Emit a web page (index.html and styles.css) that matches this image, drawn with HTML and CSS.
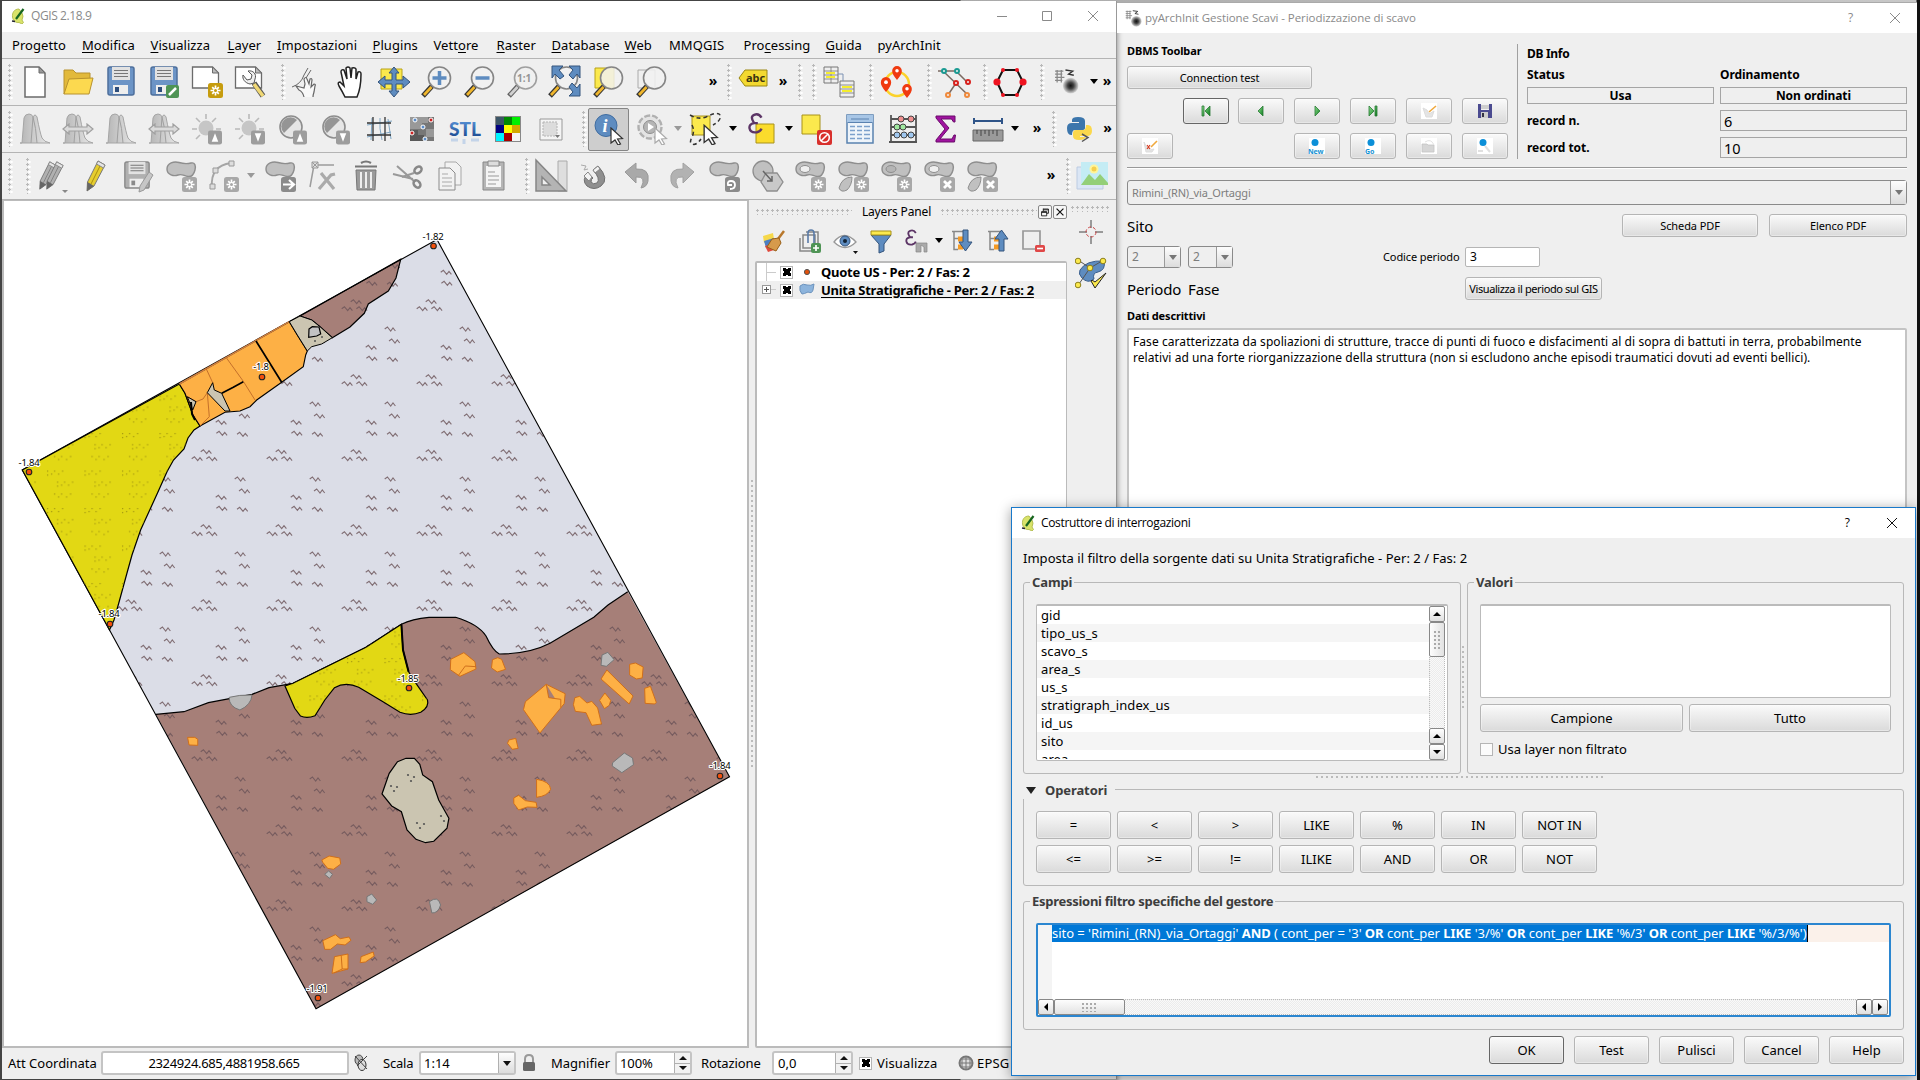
FILE: index.html
```html
<!DOCTYPE html>
<html lang="it">
<head>
<meta charset="utf-8">
<title>QGIS 2.18.9</title>
<link rel="stylesheet" href="styles.css">
</head>
<body>
<svg class="defs" aria-hidden="true">
  <defs>
    <linearGradient id="gGray" x1="0" y1="0" x2="1" y2="0"><stop offset="0" stop-color="#b4b4b4"/><stop offset="1" stop-color="#e9e9e9"/></linearGradient>
    <linearGradient id="gGreen" x1="0" y1="0" x2="1" y2="1"><stop offset="0" stop-color="#8fe08f"/><stop offset="1" stop-color="#0b7a1c"/></linearGradient>
    <radialGradient id="gBall"><stop offset="0" stop-color="#111"/><stop offset=".4" stop-color="#444"/><stop offset="1" stop-color="#d8d8d8"/></radialGradient>
    <linearGradient id="gStl" x1="0" y1="0" x2="0" y2="1"><stop offset="0" stop-color="#5f9be0"/><stop offset="1" stop-color="#123f86"/></linearGradient>
    <pattern id="waves" x="340" y="320" width="75" height="75" patternUnits="userSpaceOnUse">
      <g fill="none" stroke="#6a5357" stroke-opacity=".8" stroke-width="1.100">
        <path d="M44.700 9l2.700-2 3.300 4 2.300-3 2.400 3"/>
        <path d="M49 21l2.700-2 3.300 4 2.300-3 2.400 3"/>
        <path d="M25.700 27.300l2.700-2 3.300 4 2.300-3 2.400 3"/>
        <path d="M26.400 38.300l2.700-2 3.300 4 2.300-3 2.400 3"/>
        <path d="M47 39.300l2.700-2 3.300 4 2.300-3 2.400 3"/>
        <path d="M10.700 56.700l2.700-2 3.300 4 2.300-3 2.400 3"/>
        <path d="M1.700 63.700l2.700-2 3.300 4 2.300-3 2.400 3"/>
        <path d="M16.400 63.700l2.700-2 3.300 4 2.300-3 2.400 3"/>
      </g>
    </pattern>
    <pattern id="sand" x="44" y="506" width="37.500" height="37.500" patternUnits="userSpaceOnUse">
      <g fill="#a39710">
        <path d="M3 2h1.200v1.200h-1.200zM7 5h1.200v1.200h-1.200zM10 2h1.200v1.200h-1.200zM14 5h1.200v1.200h-1.200zM18 2h1.200v1.200h-1.200zM3 6h1.200v1.200h-1.200z"/>
        <path d="M13 13h1.200v1.200h-1.200zM17 16h1.200v1.200h-1.200zM20 13h1.200v1.200h-1.200zM24 16h1.200v1.200h-1.200zM28 13h1.200v1.200h-1.200zM13 17h1.200v1.200h-1.200z"/>
        <path d="M10 25h1.200v1.200h-1.200zM14 28h1.200v1.200h-1.200zM17 25h1.200v1.200h-1.200zM22 28h1.200v1.200h-1.200zM26 25h1.200v1.200h-1.200z"/>
      </g>
    </pattern>

    <symbol id="i-star" viewBox="0 0 15 15"><rect width="15" height="15" rx="2.500" fill="var(--b,#a8a8a8)"/><path d="M7.500 2.500v10M2.500 7.500h10M4.200 4.200l6.600 6.600M10.800 4.200l-6.600 6.600" stroke="#fff" stroke-width="1.700"/><circle cx="7.500" cy="7.500" r="1.500" fill="var(--b,#a8a8a8)"/></symbol>
    <symbol id="i-x" viewBox="0 0 15 15"><rect width="15" height="15" rx="2.500" fill="#a8a8a8"/><path d="M4 4l7 7M11 4l-7 7" stroke="#fff" stroke-width="2.800"/></symbol>
    <symbol id="i-blob" viewBox="0 0 32 32"><path d="M2 9C2 3 9 1 14 2.500S22 4 26 3s5 3 4 7-3 7-7 6.500-6-3-10-1.500S2 15 2 9z" fill="#c0c0c0" stroke="#8e8e8e" stroke-width="1.400"/></symbol>
    <symbol id="i-lens" viewBox="0 0 32 32"><path d="M12 19L2 30" stroke="#333" stroke-width="5"/><path d="M10.500 21L3 29" stroke="var(--h,#f0b62c)" stroke-width="2.800"/><circle cx="18.500" cy="12" r="11" fill="#f1f1f1" fill-opacity=".85" stroke="#858585" stroke-width="1.600"/></symbol>
    <symbol id="i-cursor" viewBox="0 0 14 18"><path d="M1 1l11.500 10.500-5 .5 3 5-2.500 1-3-5L1 16z" fill="#fff" stroke="var(--k,#333)" stroke-width="1.200"/></symbol>
    <symbol id="i-hist" viewBox="0 0 32 32"><path d="M1 30h2L5 5q1-4 5-4 3 0 4 3 2-4 4 0 3 16 5 21 2 4 8 5z" fill="url(#gGray)" stroke="#a6a6a6"/><path d="M14 4q3 10 4 26M12 30l2-26" stroke="#a0a0a0" fill="none"/></symbol>
    <symbol id="i-arr" viewBox="0 0 32 12"><path d="M1 6l6-5v3h18V1l6 5-6 5V8H7v3z" fill="#dadada" stroke="#a0a0a0" stroke-width="1.200"/></symbol>
    <symbol id="i-up" viewBox="0 0 15 15"><rect width="15" height="15" rx="2.500" fill="#9d9d9d"/><path d="M7.500 3l3.500 9h-7z" fill="#fff"/></symbol>
    <symbol id="i-dn" viewBox="0 0 15 15"><rect width="15" height="15" rx="2.500" fill="#9d9d9d"/><path d="M7.500 12l3.500-9h-7z" fill="#fff"/></symbol>
    <symbol id="i-sun" viewBox="0 0 32 32"><path d="M15 1v5M1 16h5M25 16h5M5 5l4 4M25 5l-4 4M5 26l4-4" stroke="#b9b9b9" stroke-width="1.600"/><circle cx="15" cy="15" r="7.500" fill="#c6c6c6"/></symbol>
    <symbol id="i-con" viewBox="0 0 32 32"><circle cx="14" cy="14" r="11" fill="#e6e6e6" stroke="#8d8d8d" stroke-width="1.600"/><path d="M20 7A9 9 0 1 0 7 20z" fill="#959595"/></symbol>
    <symbol id="i-page" viewBox="0 0 28 23"><path d="M1 1h20l6 6v15H1z" fill="#fff" stroke="#6b6b6b" stroke-width="1.300"/><path d="M21 1v6h6z" fill="#bbb" stroke="#6b6b6b"/></symbol>
    <symbol id="i-disk" viewBox="0 0 28 30"><rect x="1" y="1" width="26" height="28" rx="2" fill="var(--d,#6c94c6)" stroke="var(--e,#4d6f9c)" stroke-width="1.500"/><path d="M5 1h18v13H5z" fill="#e2e2e2"/><path d="M7 4.500h14M7 7.500h14M7 10.500h14" stroke="#777" stroke-width="1.200"/><rect x="6" y="19" width="15" height="9" fill="#eee"/><rect x="8" y="21" width="4" height="5" fill="var(--e,#2e4e7c)"/></symbol>
    <symbol id="i-qgis" viewBox="0 0 14 16"><path d="M8 1C3 1 1 5 1.500 9S5 15 8 14.500l3 1.500 1.500-1.500L11 12q2-4 0-7z" fill="#d9e36a" stroke="#a8b240" stroke-width=".8"/><path d="M12.500 1L5 11" stroke="#16651f" stroke-width="2.200"/><path d="M1 13l3 .5" stroke="#223" stroke-width="1.500"/></symbol>
    <symbol id="i-arch" viewBox="0 0 24 24"><path d="M1 2h8M1 5h7M1 8h9M1 11h7M3 1v12M7 1v12" stroke="#888" stroke-width="1.200"/><path d="M11 1l7 1-4 3 5 1" stroke="#333" fill="none" stroke-width="1.300"/><circle cx="16" cy="16" r="7.500" fill="url(#gBall)"/></symbol>
    <symbol id="i-pen" viewBox="0 0 22 32"><path d="M14 1l7 4-11 21-7 5 .5-9z" fill="var(--p,#e6cd2e)" stroke="#777"/><path d="M17.500 3L7 24" stroke="var(--q,#a98f10)"/><path d="M14 1l7 4-1.500 3-7-4z" fill="#e4e4e4" stroke="#888"/><path d="M3.500 22l6.500 4-7 5z" fill="#666"/></symbol>
    <symbol id="i-pin" viewBox="0 0 12 16"><path d="M6 16Q0 9 .5 5.500a5.500 5.500 0 0 1 11 0Q12 9 6 16z" fill="#f03a10"/><circle cx="6" cy="5.500" r="2" fill="#fff"/></symbol>
    <symbol id="i-eps" viewBox="0 0 18 24"><path d="M15 5Q12 0 7 2T7 11Q1 12 2 17t8 4q4-1 5-4M6 11h5" fill="none" stroke="#5c3566" stroke-width="2.600"/></symbol>
    <symbol id="i-tree" viewBox="0 0 14 20"><path d="M1 1h12M3 1v18h4M3 8h4" stroke="#888" fill="none" stroke-width="1.500"/><path d="M7 6h5v5H7zM7 14h5v5H7z" fill="#f59a23"/></symbol>
  </defs>
</svg>

<main class="desktop">
<section class="window qgis">
  <header class="titlebar">
    <svg width="14" height="16"><use href="#i-qgis"/></svg><span class="t">QGIS 2.18.9</span>
    <svg class="wbtn" width="100" height="14" fill="none" stroke="#8a8a8a"><path d="M1 7.500h10M46.500 2.500h9v9h-9zM92 2l10 10M102 2L92 12" /></svg>
  </header>
  <nav class="menu"><span>Progetto</span><span><u>M</u>odifica</span><span><u>V</u>isualizza</span><span><u>L</u>ayer</span><span><u>I</u>mpostazioni</span><span><u>P</u>lugins</span><span>Vett<u>o</u>re</span><span><u>R</u>aster</span><span><u>D</u>atabase</span><span><u>W</u>eb</span><span>MMQGIS</span><span>Pro<u>c</u>essing</span><span><u>G</u>uida</span><span>pyArchInit</span></nav>

  <div class="toolbar tb1">
    <i class="grip"></i>
    <svg class="ic" viewBox="0 0 32 32"><path d="M6 1h14l6 6v24H6z" fill="#fff" stroke="#6b6b6b" stroke-width="1.500"/><path d="M20 1v6h6z" fill="#999" stroke="#6b6b6b"/></svg>
    <svg class="ic" viewBox="0 0 32 32"><path d="M2 28V4h9l3 3h14v6" fill="#e2b93b" stroke="#b8922e"/><path d="M2 28l5-15 24-1-4 16z" fill="#fcd94f" stroke="#b8922e"/></svg>
    <svg class="ic" viewBox="0 0 32 32"><use href="#i-disk" x="2" y="0" width="28" height="30"/></svg>
    <svg class="ic" viewBox="0 0 32 32"><use href="#i-disk" x="2" y="0" width="28" height="30"/><rect x="18" y="19" width="13" height="13" rx="2" fill="#4f9455"/><path d="M21 29l7-7" stroke="#fff" stroke-width="2.500"/></svg>
    <svg class="ic" viewBox="0 0 32 32"><use href="#i-page" x="0" y="0" width="29" height="23"/><g style="--b:#c69c0e"><use href="#i-star" x="17" y="17" width="15" height="15"/></g></svg>
    <svg class="ic" viewBox="0 0 32 32"><use href="#i-page" x="0" y="0" width="29" height="23"/><path d="M20 17l9 13" stroke="#555" stroke-width="5.500"/><path d="M20 18l9 12" stroke="#f0d875" stroke-width="3.600"/><path d="M9 9l4 5 4-1 1-4-4-4c5-1 9 3 7 8l-1 4-4 1c-5-1-8-5-7-9z" fill="#eee" stroke="#555"/></svg>
    <i class="grip"></i>
    <svg class="ic" viewBox="0 0 32 32"><path d="M12 31q-1-5-5-7l-3-4 4 1 4 1 1-4-1-5q2-3 3 0l2 5 1-5q2-1 2 1l-1 7 3-3q2 0 1 2l-1 6q-1 3-1 5" fill="#f8f8f8" stroke="#666" stroke-width="1.200"/><path d="M0 21q9-3 12-12l4-7M14 12l5-8" stroke="#666" fill="none"/></svg>
    <svg class="ic" viewBox="0 0 32 32"><path d="M10 31Q7 25 4 20q-2-4 1-4l4 4L6 6q0-3 3-2l3 9-1-11q2-2 4 0l1 10 1-10q3-1 4 1v10l2-7q3-1 3 2 0 14-4 23z" fill="#fff" stroke="#222" stroke-width="1.500"/></svg>
    <svg class="ic" viewBox="0 0 32 32"><path d="M3 3h21v20H3z" fill="#fbe94d" stroke="#b8a218"/><path d="M16 1l5 6h-3v7h7v-4l7 6-7 6v-4h-7v7h3l-5 6-5-6h3v-7H7v4l-7-6 7-6v4h7V7h-3z" fill="#5e8cc0" stroke="#34547c"/></svg>
    <svg class="ic" viewBox="0 0 32 32"><use href="#i-lens"/><path d="M18.500 5v14M11.500 12h14" stroke="#5e8cc0" stroke-width="3.500"/></svg>
    <svg class="ic" viewBox="0 0 32 32"><use href="#i-lens"/><path d="M11.500 12h14" stroke="#5e8cc0" stroke-width="3.500"/></svg>
    <svg class="ic gray" viewBox="0 0 32 32"><use href="#i-lens"/><text x="10" y="16" class="g11">1:1</text></svg>
    <svg class="ic" viewBox="0 0 32 32"><use href="#i-lens" x="-2"/><path d="M2 0h11l-4 4 5 6-4 3-5-5-3 4zM30 0H19l4 4-4 5 4 4 4-5 3 4zM30 30H19l4-4-4-5 3-4 5 5 3-4z" fill="#5e8cc0" stroke="#34547c"/></svg>
    <svg class="ic" viewBox="0 0 32 32"><path d="M2 2h19v20H2z" fill="#fbe94d" stroke="#b8a218"/><use href="#i-lens"/></svg>
    <svg class="ic" viewBox="0 0 32 32"><path d="M2 4h17v18H2z" fill="none" stroke="#aaa"/><use href="#i-lens"/></svg>
    <b class="more">»</b><i class="grip"></i>
    <svg class="ic lbl" viewBox="0 0 32 32"><path d="M2 12l6-8h22v16H8z" fill="#f3d930" stroke="#9a8714"/><text x="9" y="16" class="abc">abc</text></svg>
    <b class="more c">»</b><i class="grip"></i><i class="grip"></i>
    <svg class="ic" viewBox="0 0 32 32"><g fill="#eee" stroke="#777"><path d="M1 1h14v16H1zM17 15h14v16H17z"/><path d="M1 5h14M1 9h14M1 13h14M17 19h14M17 23h14M17 27h14M8 1v16" stroke-width=".8"/></g><path d="M3 7h9M3 11h9M19 21h10M19 25h10" stroke="#f5ee2c" stroke-width="2"/><path d="M15 8h5v7" fill="none" stroke="#7d92b3"/></svg>
    <i class="grip"></i>
    <svg class="ic" viewBox="0 0 32 32"><circle cx="16" cy="18" r="12" fill="none" stroke="#fbd22a" stroke-width="2.500"/><use href="#i-pin" x="10" y="0" width="12" height="14"/><use href="#i-pin" x="-1" y="11" width="12" height="15"/><use href="#i-pin" x="20" y="18" width="12" height="14"/></svg>
    <i class="grip"></i>
    <svg class="ic" viewBox="0 0 32 32"><path d="M0 5h18l12 12M5 5l25 24M18 17L10 29" stroke="#7b6a62" fill="none" stroke-width="1.500"/><g fill="#efefef" stroke-width="2"><circle cx="6" cy="5" r="2" stroke="#1a9a92"/><circle cx="19" cy="5" r="2" stroke="#1a9a92"/><circle cx="18" cy="17" r="2" stroke="#d8201c"/><circle cx="30" cy="16" r="2" stroke="#d8201c"/><circle cx="10" cy="29" r="2" stroke="#f08a3c"/><circle cx="29" cy="29" r="2" stroke="#f08a3c"/></g></svg>
    <i class="grip"></i>
    <svg class="ic" viewBox="0 0 32 32"><path d="M3 16L9 4h14l6 12-6 13H9z" fill="none" stroke="#111" stroke-width="2"/><g fill="#ee1320"><circle cx="3" cy="16" r="3.600"/><circle cx="29" cy="16" r="3.600"/><circle cx="9" cy="4" r="2"/><circle cx="23" cy="4" r="2"/><circle cx="9" cy="29" r="2"/><circle cx="23" cy="29" r="2"/></g></svg>
    <i class="grip"></i>
    <svg class="ic" viewBox="0 0 32 32"><use href="#i-arch" x="4" y="3" width="25" height="25"/></svg>
    <i class="dd"></i><b class="more c">»</b>
  </div>

  <div class="toolbar tb2">
    <i class="grip"></i>
    <svg class="ic" viewBox="0 0 32 32"><use href="#i-hist"/></svg>
    <svg class="ic" viewBox="0 0 32 32"><use href="#i-hist"/><use href="#i-arr" y="10" width="32" height="12"/></svg>
    <svg class="ic" viewBox="0 0 32 32"><use href="#i-hist"/></svg>
    <svg class="ic" viewBox="0 0 32 32"><use href="#i-hist"/><use href="#i-arr" y="10" width="32" height="12"/></svg>
    <svg class="ic" viewBox="0 0 32 32"><use href="#i-sun"/><use href="#i-up" x="17" y="17" width="14" height="15"/></svg>
    <svg class="ic" viewBox="0 0 32 32"><use href="#i-sun"/><use href="#i-dn" x="17" y="17" width="14" height="15"/></svg>
    <svg class="ic" viewBox="0 0 32 32"><use href="#i-con"/><use href="#i-up" x="16" y="17" width="14" height="15"/></svg>
    <svg class="ic" viewBox="0 0 32 32"><use href="#i-con"/><use href="#i-dn" x="16" y="17" width="14" height="15"/></svg>
    <svg class="ic" viewBox="0 0 32 32"><path d="M9 5l-1 22M17 5q-1 10 2 22M25 6l3 20M4 12l25-4M4 24l24-5" stroke="#7fa6c4" fill="none"/><path d="M10 4v24M22 4v24M4 10h24M4 22h24" stroke="#333" stroke-width="1.300"/></svg>
    <svg class="ic" viewBox="0 0 32 32"><path d="M4 4h24v24H4z" fill="#777"/><path d="M4 4h12v12H4zM20 16h8v8h-8zM16 4h6v6h-6z" fill="#999"/><path d="M4 17h8v11H4zM12 22h6v6h-6z" fill="#595959"/><g stroke="#fff"><circle cx="9" cy="7" r="2" fill="#5b8cc8"/><circle cx="25" cy="7" r="2" fill="#c22"/><circle cx="17" cy="14" r="2" fill="#5b8cc8"/><circle cx="6" cy="20" r="2" fill="#c22"/><circle cx="19" cy="26" r="2" fill="#5b8cc8"/></g></svg>
    <svg class="ic" viewBox="0 0 32 32"><text x="0" y="23" class="stl" textLength="32" lengthAdjust="spacingAndGlyphs">STL</text><path d="M2 27h7M15 26v5M22 27h8" stroke="#a9c3e6" stroke-width="3" opacity=".6"/></svg>
    <svg class="ic" viewBox="0 0 32 32"><path d="M3 3h26v26H3z" fill="#888"/><path d="M4 4h8v8H4z" fill="#3c5566"/><path d="M12 4h8v8h-8z" fill="#008a00"/><path d="M20 4h8v8h-8z" fill="#00f000"/><path d="M4 12h8v8H4z" fill="#000080"/><path d="M12 12h8v8h-8z" fill="#ffff00"/><path d="M20 12h8v8h-8z" fill="#d4a800"/><path d="M4 20h8v8H4z" fill="#00f4ff"/><path d="M12 20h8v8h-8z" fill="#a80000"/><path d="M20 20h8v8h-8z" fill="#f4f4f4"/></svg>
    <svg class="ic" viewBox="0 0 32 32"><path d="M5 6h22v21H5z" fill="#f4f4f4" stroke="#999"/><path d="M8 9h14v14H8z" fill="#dcdcdc" stroke="#b4b4b4" stroke-dasharray="2 1"/><path d="M20 22h5l-2.500 3z" fill="#777"/></svg>
    <i class="grip"></i>
    <span class="pressed"><svg class="ic" viewBox="0 0 32 32"><circle cx="13" cy="12.500" r="11" fill="#5e8cc0" stroke="#3f6ca0"/><text x="9.500" y="19" class="info">i</text><use href="#i-cursor" x="17" y="14" width="14" height="18"/></svg></span>
    <svg class="ic" viewBox="0 0 32 32"><circle cx="14" cy="14" r="11.500" fill="#e4e4e4" stroke="#b0b0b0" stroke-width="2.400" stroke-dasharray="6 2"/><circle cx="14" cy="14" r="6.500" fill="#b5b5b5" stroke="#8f8f8f"/><path d="M12 10l6 4-6 4z" fill="#fff"/><g style="--k:#aaa"><use href="#i-cursor" x="18" y="14" width="14" height="18"/></g></svg>
    <i class="dd dis"></i>
    <svg class="ic" viewBox="0 0 32 32"><path d="M3 3h18v19H3z" fill="#fbe94d" stroke="#a8921a"/><path d="M1 2q8 5 16 2 12-6 14-2 2 5-7 10M3 12q3 6 0 12-3 6 0 7 4 2 9-5" fill="none" stroke="#333" stroke-width="1.500" stroke-dasharray="4 3"/><use href="#i-cursor" x="14" y="11" width="16" height="21"/></svg>
    <i class="dd"></i>
    <svg class="ic" viewBox="0 0 32 32"><path d="M11 11h18v19H11z" fill="#fbdc2c" stroke="#a8921a"/><use href="#i-eps" x="2" y="0" width="18" height="22"/></svg>
    <i class="dd"></i>
    <svg class="ic" viewBox="0 0 32 32"><path d="M2 2h18v19H2z" fill="#fbe94d" stroke="#a8921a"/><rect x="17" y="17" width="15" height="15" rx="2" fill="#d8302c"/><circle cx="24.500" cy="24.500" r="4.800" fill="none" stroke="#fff" stroke-width="1.600"/><path d="M21 28l7-7" stroke="#fff" stroke-width="1.600"/></svg>
    <svg class="ic" viewBox="0 0 32 32"><path d="M3 2h26v28H3z" fill="#eef4fa" stroke="#5a82b0" stroke-width="1.500"/><path d="M3 2h26v7H3z" fill="#a8c6e6"/><path d="M4 9.500h24M7 6h18" stroke="#5a82b0"/><path d="M6 13.500h5M6 17.500h5M6 21.500h5M6 25.500h5M13 13.500h5M13 17.500h5M13 21.500h5M13 25.500h5M20 13.500h6M20 17.500h6M20 21.500h6M20 25.500h6" stroke="#7ba0cc" stroke-width="1.600"/></svg>
    <svg class="ic" viewBox="0 0 32 32"><path d="M4 2v26M29 2v26M2 29h28M4 6h25M4 14h25M4 22h25" stroke="#555" stroke-width="1.800"/><g stroke="#444"><g fill="#f09090"><circle cx="14" cy="6" r="3"/><circle cx="24" cy="6" r="3"/></g><g fill="#a0e8a0"><circle cx="10" cy="14" r="3"/><circle cx="16" cy="14" r="3"/></g><g fill="#a0c8f0"><circle cx="10" cy="22" r="3"/><circle cx="17" cy="22" r="3"/><circle cx="24" cy="22" r="3"/></g></g></svg>
    <svg class="ic" viewBox="0 0 32 32"><path d="M6 3h19v6h-1.500l-2-3H11l8 9-9 11h12l2-4h1.500l-1 7H6v-2l9-11L6 5z" fill="#a013a0" stroke="#6a0c6a"/></svg>
    <svg class="ic" viewBox="0 0 32 32"><path d="M2 8h28M2 5v6M30 5v6" stroke="#2f5488" stroke-width="2"/><path d="M1 17h30v11H1z" fill="#9a9a9a" stroke="#666"/><path d="M5 17v4M9 17v6M13 17v4M17 17v6M21 17v4M25 17v6" stroke="#444"/></svg>
    <i class="dd"></i><b class="more">»</b><i class="grip"></i>
    <svg class="ic" viewBox="0 0 32 32"><path d="M15 4q7 0 7 4v7q0 2-3 2h-7q-3 0-3 5H8q-4 0-4-7 0-5 5-5h7V9H9V7q0-3 6-3z" fill="#3c76ac"/><path d="M16 27q-6 0-6-4v-3q0-3 3-3h7q3 0 3-5h2q4 0 4 6 0 5-5 5h-7v1h6q-1 3-7 3z" fill="#fbd84c"/><path d="M19 21l6 3.500-6 4" fill="none" stroke="#555" stroke-width="1.500"/></svg>
    <b class="more c">»</b>
  </div>

  <div class="toolbar tb3">
    <i class="grip"></i><i class="grip"></i>
    <svg class="ic" viewBox="0 0 32 32"><g style="--p:#b0b0b0;--q:#808080"><use href="#i-pen" x="0" y="0" width="20" height="31"/><use href="#i-pen" x="7" y="0" width="20" height="31"/></g><path d="M25 30h6l-3 3z" fill="#888"/></svg>
    <svg class="ic" viewBox="0 0 32 32"><use href="#i-pen" x="4" y="0" width="22" height="32"/></svg>
    <svg class="ic" viewBox="0 0 32 32"><g style="--d:#b0b0b0;--e:#8a8a8a"><use href="#i-disk" x="1" y="1" width="28" height="28"/></g><path d="M27 12l4 3-9 15-5 2 1-6z" fill="#c6c6c6" stroke="#999"/></svg>
    <svg class="ic" viewBox="0 0 32 32"><use href="#i-blob"/><use href="#i-star" x="17" y="17" width="15" height="15"/></svg>
    <svg class="ic" viewBox="0 0 32 32"><path d="M4 27Q2 6 23 3" fill="none" stroke="#a5a5a5" stroke-width="1.800"/><path d="M2 24h5v5H2zM5 8h5v5H5zM21 1h5v5h-5z" fill="#ddd" stroke="#999"/><use href="#i-star" x="16" y="17" width="15" height="15"/></svg>
    <i class="dd dis"></i>
    <svg class="ic" viewBox="0 0 32 32"><use href="#i-blob"/><rect x="17" y="17" width="15" height="15" rx="2.500" fill="#8b8b8b"/><path d="M19 24.500h10M25 20l5 4.500-5 4.500" stroke="#fff" stroke-width="2.200" fill="none"/></svg>
    <svg class="ic" viewBox="0 0 32 32"><path d="M6 5h20M6 5L2 27" stroke="#9c9c9c" stroke-width="1.500"/><path d="M4 2h6v6H4zM4 2l6 6M10 2l-6 6" fill="#ddd" stroke="#999"/><path d="M13 13l13 16M11 29l12-14 4-1" stroke="#aaa" stroke-width="3.200" fill="none"/></svg>
    <svg class="ic" viewBox="0 0 32 32"><path d="M6 10l1 20h18l1-20z" fill="#9b9b9b" stroke="#777"/><path d="M11 12v16M16 12v16M21 12v16" stroke="#eee" stroke-width="2"/><path d="M5 6.500h22M11 3q5-3 10 0" stroke="#777" stroke-width="2.200" fill="none"/></svg>
    <svg class="ic" viewBox="0 0 32 32"><path d="M1 14l20 5M5 6l18 16" stroke="#999" stroke-width="2"/><g fill="none" stroke="#888" stroke-width="2.500"><ellipse cx="26" cy="10" rx="4" ry="3" transform="rotate(-40 26 10)"/><ellipse cx="25" cy="24" rx="4" ry="3" transform="rotate(50 25 24)"/></g><path d="M22 13L10 17" stroke="#999" stroke-width="2"/></svg>
    <svg class="ic" viewBox="0 0 32 32"><g fill="#f2f2f2" stroke="#a8a8a8"><path d="M10 2h11l5 5v18H10z"/><path d="M4 8h11l5 5v17H4z" stroke="#8a8a8a"/></g><path d="M7 14h6M7 18h10M7 22h10M7 26h10" stroke="#aaa"/></svg>
    <svg class="ic" viewBox="0 0 32 32"><path d="M5 2h21v28H5z" fill="#b5b5b5" stroke="#888"/><path d="M8 6h15v21H8z" fill="#f4f4f4"/><path d="M10 1h11v5H10z" fill="#ddd" stroke="#888"/><path d="M10 12h7M10 16h11M10 20h11M10 24h8" stroke="#999"/></svg>
    <i class="grip"></i>
    <svg class="ic" viewBox="0 0 32 32"><path d="M22 1h9v30h-9z" fill="#dedede" stroke="#aaa"/><path d="M0 0l30 31H0zM6 17v8h8z" fill="#b4b4b4" stroke="#858585" stroke-width="1.500" fill-rule="evenodd"/></svg>
    <svg class="ic" viewBox="0 0 32 32"><path d="M6 18q2 11 11 9 12-3 8-15L20 5" fill="none" stroke="#7a7a7a" stroke-width="0"/><path d="M7 15Q6 26 14 27q12 0 11-10L19 5" fill="none" stroke="#8a8a8a" stroke-width="0"/><path d="M9 13q-7 7-1 13 7 5 14 0 9-7-3-20l-5 4q8 9 4 13-4 2-6-1 0-3 2-4z" fill="#8f8f8f" stroke="#707070"/><path d="M14 10l5-4 2 3-5 4zM5 16l4-4 4 5-3 4z" fill="#f2f2f2" stroke="#888"/><path d="M2 5l5 1-2 4 4-1" stroke="#aaa" fill="none"/></svg>
    <svg class="ic" viewBox="0 0 32 32"><path d="M3 12L14 3v6q14-1 12 12-1 6-7 7 6-12-5-11v6z" fill="#a9a9a9" stroke="#999"/></svg>
    <svg class="ic" viewBox="0 0 32 32"><path d="M29 12L18 3v6Q4 8 6 21q1 6 7 7-6-12 5-11v6z" fill="#b2b2b2" stroke="#a2a2a2"/></svg>
    <svg class="ic" viewBox="0 0 32 32"><use href="#i-blob"/><rect x="17" y="17" width="15" height="15" rx="2.500" fill="#8b8b8b"/><path d="M22 29q5 0 5-4t-4-4-3 4l4 0" stroke="#fff" stroke-width="1.800" fill="none"/></svg>
    <svg class="ic" viewBox="0 0 32 32"><circle cx="12" cy="11" r="10" fill="#c0c0c0" stroke="#8e8e8e" stroke-width="1.300"/><path d="M15 13h11l6 9-6 9H16l-6-9z" fill="#c9c9c9" stroke="#8e8e8e" stroke-width="1.300"/><path d="M12 11l9 10M21 16v5h-5" stroke="#666" fill="none" stroke-width="1.500"/></svg>
    <svg class="ic" viewBox="0 0 32 32"><use href="#i-blob"/><ellipse cx="11" cy="9" rx="5" ry="3.500" fill="#efefef" stroke="#8e8e8e"/><use href="#i-star" x="17" y="17" width="15" height="15"/></svg>
    <svg class="ic" viewBox="0 0 32 32"><use href="#i-blob"/><path d="M2 28q3-11 13-11 0 8-5 13-6 3-8-2z" fill="#c0c0c0" stroke="#8e8e8e"/><use href="#i-star" x="17" y="17" width="15" height="15"/></svg>
    <svg class="ic" viewBox="0 0 32 32"><use href="#i-blob"/><ellipse cx="11" cy="9" rx="5" ry="3.500" fill="#b5b5b5" stroke="#8e8e8e"/><use href="#i-star" x="17" y="17" width="15" height="15"/></svg>
    <svg class="ic" viewBox="0 0 32 32"><use href="#i-blob"/><ellipse cx="11" cy="9" rx="5" ry="3.500" fill="#efefef" stroke="#8e8e8e"/><use href="#i-x" x="17" y="17" width="15" height="15"/></svg>
    <svg class="ic" viewBox="0 0 32 32"><use href="#i-blob"/><path d="M2 28q3-11 13-11 0 8-5 13-6 3-8-2z" fill="#c0c0c0" stroke="#8e8e8e"/><use href="#i-x" x="17" y="17" width="15" height="15"/></svg>
    <b class="more">»</b><i class="grip"></i>
    <svg class="ic" viewBox="0 0 32 32"><path d="M0 7h26v22H0z" fill="#dbe6f5" stroke="#bccbe2"/><path d="M4 2h27v23H4z" fill="#c4ecf4"/><path d="M4 25l8-11 6 6 5-6 8 9v2z" fill="#94cf78"/><circle cx="17" cy="9" r="4.500" fill="#fff59a"/><circle cx="17" cy="9" r="2.500" fill="#f5cf4d"/></svg>
  </div>

  <div class="work">
    <div class="canvas">
      <svg class="map" viewBox="4 201 742 844" width="742" height="844">
        <path d="M437 239.500L729.500 776.700 316 1008.700 22.300 470z" fill="#dbdde7"/>
        <g fill="#a67f78">
          <path d="M400.700 259.300L396 278l-7.700 13-20 13-4 9.300L350 327l-17.700 10.700L320 326.700 311.700 320 300 316z"/>
          <path d="M156 714.300l28-2.600 24.400-9 43.600-8.400 17-6.600 24-4.400 73-36 35.400-23Q412 619 429 617.300h26.600Q478 624 486 636q7 15 13.300 18 30 0 50.700-10.700l43.800-26 14.200-12.300 19.700-13.300L729.500 776.700 316 1008.700z"/>
        </g>
        <path d="M437 239.500L729.500 776.700 316 1008.700 22.300 470z" fill="url(#waves)" stroke="#000" stroke-width="1.100"/>
        <g fill="none" stroke="#000" stroke-width="1.200">
          <path d="M400.700 259.300L396 278l-7.700 13-20 13-4 9.300L350 327l-17.700 10.700L320 326.700 311.700 320 300 316z"/>
          <path d="M156 714.300l28-2.600 24.400-9 43.600-8.400 17-6.600 24-4.400 73-36 35.400-23Q412 619 429 617.300h26.600Q478 624 486 636q7 15 13.300 18 30 0 50.700-10.700l43.800-26 14.200-12.300 19.700-13.300"/>
        </g>
        <g stroke="#000" stroke-width="1.200">
          <path d="M179.300 384L185 393.300 193 415l7 11-6 4-6 8-4 11-10.500 11-6.500 11.700-9.500 21.300-16.900 37-8.600 25-5 18-8.200 30-4.800 17-4.500 10L22.300 470z" fill="#e2d814"/>
          <path d="M285 686l8-2.700 73-36 35.400-23L403 650l5.600 21.700L416 683.300 427.500 700q2 7-6.800 12.300-10 4-20.700 0L383 701.700 358.700 687.300q-13-6-24.200.4L324.800 700 315 715.700q-8 3-14.500.3L294.700 708.300z" fill="#e2d814"/>
        </g>
        <path d="M179.300 384L185 393.300 193 415l7 11-6 4-6 8-4 11-10.500 11-6.500 11.700-9.500 21.300-16.900 37-8.600 25-5 18-8.200 30-4.800 17-4.500 10L22.300 470z" fill="url(#sand)"/>
        <path d="M285 686l8-2.700 73-36 35.400-23L403 650l5.600 21.700L416 683.300 427.500 700q2 7-6.800 12.300-10 4-20.700 0L383 701.700 358.700 687.300q-13-6-24.200.4L324.800 700 315 715.700q-8 3-14.500.3L294.700 708.300z" fill="url(#sand)"/>
        <path d="M401.400 624.300L403 650l5.600 21.700" fill="none" stroke="#000" stroke-width="2"/>

        <path d="M289.300 321.700L179.300 384 185 393.300 193 415l7 11 25-13.700 15-1.300 10-4.300 6.700-6.700 25-17.700 21.600-15.600 2.400-11.700 1.600-4-10-16z" fill="#fdb045" stroke="#000" stroke-width="1.100"/>
        <path d="M289.300 321.700L179.300 384" stroke="#d08040" stroke-width="1.500"/>
        <path d="M226 357.300l17.300 24L255 400M206 368.300l6.700 14.400M207.300 392.700l2 24-9 9M188 397l8 4.700 7-2.700 4.300-6.300" fill="none" stroke="#c5702a"/>
        <g fill="#cbc5b1" stroke="#000">
          <path d="M289.300 321.700L300 316l11.700 4 8.300 6.700 12.300 11-10.600 6.300-10 2.700-4.400 4.300-10-16z"/>
          <path d="M212.700 382.700l1.600 7.300 7.400 3.300 8.300 17.700h-5l-17.700-18.300zM187.300 396.700l8.700 5-3.300 8.300z"/>
          <path d="M309 329l3.300-2.300 6.700.3 1.700 7-4 2-8 1.300z" fill="#c3c3c3" stroke-width="1.200"/>
        </g>
        <path d="M256 341l25.700 41.300M221.700 393.300l11.600-6 10-5.600" fill="none" stroke="#000" stroke-width="1.700"/>
        <path d="M191 402l1 12 3 6" fill="none" stroke="#000" stroke-width="2"/>
        <path d="M397.500 761.700L406 758.300h8.400l5.400 6 2.900 10.700 9.700 6.700 6.300 18.300 10.200 18.300-1.900 10-13.200 13-8.200 1.400-9.600-3.400-9-9.300-5.600-18.300-9.700-5.700-9.700-12 7.200-20.700z" fill="#cbc5b1" stroke="#000" stroke-width="1.200"/>
        <g fill="#555"><circle cx="408" cy="775" r="1.100"/><circle cx="414" cy="777" r="1.100"/><circle cx="411" cy="781" r="1.100"/><circle cx="391" cy="786" r="1.100"/><circle cx="397" cy="787" r="1.100"/><circle cx="394" cy="791" r="1.100"/><circle cx="417" cy="823" r="1.100"/><circle cx="424" cy="824" r="1.100"/><circle cx="420" cy="828" r="1.100"/><circle cx="441" cy="816" r="1.100"/><circle cx="444" cy="821" r="1.100"/><circle cx="315" cy="341" r="1"/><circle cx="322" cy="337" r="1"/></g>

        <g class="finds" transform="translate(0 600) scale(.4847 .33333)">
          <g fill="#fdb045" stroke="#cf6f1c">
            <path d="M930 178l27-20 23 27 2 22-33 22-20-20zM945 228l15-30 22 2"/>
            <path d="M1027 173l8 5 8 30-17 8-12-12 2-25z"/>
            <path d="M1127 253l39 28-2 30-50 88-34-70 4-24zM1127 253l5 40 25 5 0 25"/>
            <path d="M1186 293l10-4 15 20 10-5 12 20 8 48-20 4-12-38-22-4-4-20z"/>
            <path d="M1248 279l12 22-3 15-10 10-10-25z"/>
            <path d="M1252 210l54 78-8 24-58-75z"/>
            <path d="M1299 193l12-4 16 12-2 33-12 3-14-12z"/>
            <path d="M1330 265l12-6 12 48-3 5-20-2z"/>
            <path d="M1050 420l14-5 5 30-12 3-10-18z"/>
            <path d="M387 412h15l6 6v18l-18-1z"/>
            <path d="M1107 538q28 6 29 30-6 20-29 24z"/>
            <path d="M1060 594l10-8 14 16 22 5 2 15-20-1-18 9-10-20z"/>
            <path d="M664 780l15-12 22 6 2 18-15 16-12-3-10-18z"/>
            <path d="M666 1022l26-18 10 12 18-5 4 10-12 14-16-3-14 16h-12z" transform="translate(0 0)"/>
            <path d="M690 1070l28-8v45l-33 13zM704 1067l2 40-17 12M706 1107l12 0"/>
            <path d="M745 1070l25-14 2 12-18 18-11 2z"/>
          </g>
          <g fill="#b9b9b9" stroke="#777">
            <path d="M473 292q20-8 47-7-2 30-25 45-23-10-22-38z"/>
            <path d="M1242 165l12-8 13 22-16 20-11-3z"/>
            <path d="M1264 488l24-29 17 15 2 20-24 24-20-20z"/>
            <path d="M670 823l8-10 8 10-6 12z"/><path d="M757 890l10-8 10 18-8 13-12-8z"/><path d="M886 905q18-20 23 10-5 25-18 24z"/>
          </g>
        </g>
        <g fill="#f4500c" stroke="#222" stroke-width="1.100"><circle cx="433.500" cy="246" r="2.800"/><circle cx="262" cy="377" r="2.800"/><circle cx="29" cy="472" r="2.800"/><circle cx="110" cy="624" r="2.800"/><circle cx="409" cy="688" r="2.800"/><circle cx="720" cy="776" r="2.800"/><circle cx="318" cy="998" r="2.800"/></g>
        <g class="quota"><text x="433" y="240">-1.82</text><text x="261" y="370">-1.8</text><text x="29" y="466">-1.84</text><text x="109" y="617">-1.84</text><text x="408" y="682">-1.85</text><text x="720" y="769">-1.84</text><text x="317" y="992">-1.91</text></g>
      </svg>
    </div>
    <div class="vsplit"><i class="vdots"></i></div>
    <div class="dock">
      <div class="dockhead"><i class="hdots"></i><span>Layers Panel</span><i class="hdots"></i>
        <svg class="dbtn" viewBox="0 0 14 14" fill="none" stroke="#111"><path d="M5 3.500h6v5H9M5 3v3M3 6.500h6v5H3zM3 7.500h6M5 4.500h6"/></svg><svg class="dbtn" viewBox="0 0 14 14" stroke="#111" stroke-width="1.400"><path d="M3 3l8 8M11 3l-8 8"/></svg></div>
      <div class="docktools">
        <svg class="ic24" viewBox="0 0 24 24"><path d="M1 7l10-3 1 6-10 4z" fill="#f6d84a"/><path d="M2 12l10-3 1 7-9 3z" fill="#4c7fc4"/><path d="M3 17l9-3 3 6-9 3z" fill="#e04a3c"/><path d="M22 2l-6 8" stroke="#b8782c" stroke-width="2.500"/><path d="M10 10l7-1 2 5-5 8-9-4z" fill="#d69a4c" stroke="#996018"/></svg>
        <svg class="ic24" viewBox="0 0 24 24"><path d="M2 9v13h12M5 6v13h12V6zM8 3h12v14" fill="none" stroke="#888" stroke-width="1.500"/><path d="M10 14V4q0-3 3-3t3 3v10" fill="none" stroke="#5a7ba8" stroke-width="1.600"/><rect x="13" y="14" width="10" height="10" rx="2" fill="#4f9455"/><path d="M18 16v6M15 19h6" stroke="#fff" stroke-width="1.700"/></svg>
        <svg class="ic24" viewBox="0 0 24 24"><path d="M1 13Q11 0 23 13 12 24 1 13z" fill="#fff" stroke="#999" stroke-width="1.300"/><circle cx="12" cy="12" r="5" fill="#5e8cc0" stroke="#34547c"/><circle cx="12" cy="12" r="2" fill="#123"/><path d="M20 22h5l-2.500 3z" fill="#111"/></svg>
        <svg class="ic24" viewBox="0 0 24 24"><path d="M2 6h20l-7 9v7l-5 2v-9z" fill="#5e8cc0" stroke="#34547c"/><path d="M2 2h20v4H2z" fill="#fbe94d" stroke="#a8921a"/></svg>
        <svg class="ic24" viewBox="0 0 24 24"><use href="#i-eps" x="1" y="0" width="13" height="18"/><path d="M12 14h11v9h-3v-5l-3-2v7h-5z" fill="#aaa" stroke="#888" stroke-width=".7"/></svg>
        <i class="dd"></i>
        <svg class="ic24" viewBox="0 0 24 24"><use href="#i-tree" x="1" y="1" width="14" height="21"/><path d="M13 1h5v12h4l-6.500 9L9 13h4z" fill="#5e8cc0" stroke="#34547c"/></svg>
        <svg class="ic24" viewBox="0 0 24 24"><use href="#i-tree" x="1" y="1" width="14" height="21"/><path d="M13 22h5V10h4L15.500 1 9 10h4z" fill="#5e8cc0" stroke="#34547c"/></svg>
        <svg class="ic24" viewBox="0 0 24 24"><path d="M2 2h17v18H2z" fill="none" stroke="#999" stroke-width="1.700"/><rect x="14" y="16" width="10" height="7" rx="1.500" fill="#e04848"/><path d="M16 19.500h6" stroke="#fff" stroke-width="1.600"/></svg>
      </div>
      <div class="tree">
        <div class="row"><i class="branch"></i><i class="chk"></i><svg width="16" height="14"><circle cx="8" cy="7" r="2.600" fill="#e0500c" stroke="#555"/></svg><span>Quote US - Per: 2 / Fas: 2</span></div>
        <div class="row alt"><i class="branch plus"></i><i class="chk"></i><svg width="16" height="14"><path d="M1 3q3-3 7-1 4 1 7-1l-1 6q-1 4-5 2-4 2-6 2-3-3-2-8z" fill="#8db4dc" stroke="#6c93bd"/></svg><span><u>Unita Stratigrafiche - Per: 2 / Fas: 2</u></span></div>
      </div>
    </div>
    <div class="side"><i class="hdots"></i>
      <svg width="26" height="26" viewBox="0 0 26 26" fill="none"><path d="M13 1v8M13 17v8M1 13h8M17 13h8" stroke="#444"/><circle cx="13" cy="13" r="5" stroke="#c84040" stroke-dasharray="3 2"/></svg>
      <svg width="32" height="32" viewBox="0 0 32 32"><path d="M5 13q6-10 24-9 2 9-6 11-6 1-4 7-6 5-12-1-4-4-2-8z" fill="#5e8cc0" stroke="#3a5e8c"/><path d="M3 3l12 8-11 16M15 11l12-7" stroke="#555" fill="none"/><g fill="#fbe94d" stroke="#8d7f1c"><circle cx="3" cy="4" r="2.800"/><circle cx="15" cy="11" r="2.800"/><circle cx="28" cy="4" r="2.800"/><circle cx="3" cy="28" r="2.800"/></g><path d="M16 24l4 7L31 16l-11 9-3-2z" fill="#fbe94d" stroke="#222"/></svg>
    </div>
  </div>

  <footer class="status">
    <span class="lb a">Att Coordinata</span><span class="field coord">2324924.685,4881958.665</span>
    <svg class="mouse" width="16" height="18" viewBox="0 0 16 18"><ellipse cx="6" cy="6" rx="4" ry="5" fill="#bbb" stroke="#444"/><ellipse cx="9" cy="11" rx="4" ry="5.500" fill="#ddd" stroke="#333"/><path d="M2 2l12 13M14 2L4 12" stroke="#444"/></svg>
    <span class="lb b">Scala</span><span class="field combo scale">1:14<i class="drop"></i></span>
    <svg class="lock" width="14" height="18" viewBox="0 0 14 18"><path d="M3 9V5q0-4 4-4t4 4v4" fill="none" stroke="#999" stroke-width="2"/><rect x="1" y="8" width="12" height="9" rx="1.500" fill="#666"/></svg>
    <span class="lb c">Magnifier</span><span class="field spin mag">100%<i class="ud"></i></span>
    <span class="lb d">Rotazione</span><span class="field spin rot">0,0<i class="ud"></i></span>
    <i class="chk"></i><span class="lb e">Visualizza</span>
    <svg class="globe" width="16" height="16" viewBox="0 0 16 16" fill="#ddd" stroke="#777"><circle cx="8" cy="8" r="6.500" stroke-width="2"/><path d="M8 1v14M1 8h14M4 4h8v8H4z" fill="none"/></svg><span class="lb f">EPSG</span>
  </footer>
</section>

<section class="window scavi">
  <header class="titlebar"><svg width="17" height="17"><use href="#i-arch"/></svg><span class="t">pyArchInit Gestione Scavi - Periodizzazione di scavo</span><span class="q">?</span><svg width="12" height="12" stroke="#8a8a8a"><path d="M1 1l10 10M11 1L1 11"/></svg></header>
  <div class="top">
    <div class="dbms">
      <h4>DBMS Toolbar</h4>
      <button class="btn conn">Connection test</button>
      <div class="navgrid">
        <i></i>
        <button class="btn focus"><svg viewBox="0 0 16 16"><path d="M4 3h2v10H4zM12 3v10L7 8z" fill="url(#gGreen)" stroke="#2a7a35" stroke-width=".8"/></svg></button>
        <button class="btn"><svg viewBox="0 0 16 16"><path d="M10 3v10L5 8z" fill="url(#gGreen)" stroke="#2a7a35" stroke-width=".8"/></svg></button>
        <button class="btn"><svg viewBox="0 0 16 16"><path d="M6 3v10l5-5z" fill="url(#gGreen)" stroke="#2a7a35" stroke-width=".8"/></svg></button>
        <button class="btn"><svg viewBox="0 0 16 16"><path d="M10 3h2v10h-2zM4 3v10l5-5z" fill="url(#gGreen)" stroke="#2a7a35" stroke-width=".8"/></svg></button>
        <button class="btn"><svg viewBox="0 0 16 16"><path d="M0 0h16v16H0z" fill="#fff"/><path d="M2 5l4 2 2 4 5-3-2 6H5z" fill="#e4e4e4" stroke="#ddd"/><path d="M15 3L8 9" stroke="#f0a83c" stroke-width="1.600"/></svg></button>
        <button class="btn"><svg viewBox="0 0 16 16"><path d="M1 1h14v14H1z" fill="#4b4b90"/><path d="M4 1h8v6H4z" fill="#f2f2f2"/><path d="M4 3h8M4 5h8" stroke="#999" stroke-width=".8"/><path d="M4 9h7v6H4z" fill="#ccc"/><path d="M5 10h2v4H5z" fill="#334"/></svg></button>
        <button class="btn"><svg viewBox="0 0 16 16"><path d="M0 0h16v16H0z" fill="#fff"/><path d="M2 4l2 4 4 4 4-1-2 3H4z" fill="#e4e4e4" stroke="#ddd"/><path d="M15 3L9 9" stroke="#f0a83c" stroke-width="1.600"/><path d="M5 7l3 4M8 7l-3 4" stroke="#d63a20" stroke-width="1.200"/></svg></button>
        <i></i><i></i>
        <button class="btn"><svg viewBox="0 0 16 16"><path d="M0 0h16v16H0z" fill="#fff"/><circle cx="6" cy="4.500" r="3.500" fill="#0b8fd8"/><text x="-1" y="16" class="ng">New</text></svg></button>
        <button class="btn"><svg viewBox="0 0 16 16"><path d="M0 0h16v16H0z" fill="#fff"/><circle cx="6" cy="4.500" r="3.500" fill="#0b8fd8"/><text x="0" y="16" class="ng">Go</text></svg></button>
        <button class="btn"><svg viewBox="0 0 16 16"><path d="M0 0h16v16H0z" fill="#fff"/><path d="M1 6h5l1 1h6v7H1z" fill="#d6d6d6" stroke="#c4c4c4" stroke-width=".8"/><path d="M4 4q6-4 9 3" fill="none" stroke="#e2e2e2"/></svg></button>
        <button class="btn"><svg viewBox="0 0 16 16"><path d="M0 0h16v16H0z" fill="#fff"/><circle cx="6" cy="4.500" r="3.500" fill="#0b8fd8"/><path d="M8 8l5 6M1 13h5" stroke="#e0e0e0" stroke-width="2"/></svg></button>
      </div>
    </div>
    <div class="dbinfo">
      <h4>DB Info</h4>
      <div class="infogrid"><b>Status</b><b>Ordinamento</b><span class="box mid">Usa</span><span class="box mid">Non ordinati</span><b>record n.</b><span class="box num">6</span><b>record tot.</b><span class="box num">10</span></div>
    </div>
  </div>
  <hr>
  <div class="combobox site">Rimini_(RN)_via_Ortaggi<i class="drop"></i></div>
  <div class="line sito"><span class="big">Sito</span><button class="btn p1">Scheda PDF</button><button class="btn p2">Elenco PDF</button></div>
  <div class="line codes"><div class="combobox c1">2<i class="drop"></i></div><div class="combobox c2">2<i class="drop"></i></div><span class="cl">Codice periodo</span><span class="inp">3</span></div>
  <div class="line per"><span class="big">Periodo</span><span class="big">Fase</span><button class="btn vis">Visualizza il periodo sul GIS</button></div>
  <h4 class="dd4">Dati descrittivi</h4>
  <div class="desc"><span>Fase caratterizzata da spoliazioni di strutture, tracce di punti di fuoco e disfacimenti al di sopra di battuti in terra, probabilmente</span><br><span>relativi ad una forte riorganizzazione della struttura (non si escludono anche episodi traumatici dovuti ad eventi bellici).</span></div>
</section>

<section class="window query">
  <header class="titlebar"><svg width="14" height="16"><use href="#i-qgis"/></svg><span class="t">Costruttore di interrogazioni</span><span class="q">?</span><svg width="12" height="12" stroke="#111"><path d="M1 1l10 10M11 1L1 11"/></svg></header>
  <p class="lead">Imposta il filtro della sorgente dati su Unita Stratigrafiche - Per: 2 / Fas: 2</p>
  <div class="cols">
    <div class="group campi"><span class="cap">Campi</span>
      <div class="list"><ul><li>gid</li><li>tipo_us_s</li><li>scavo_s</li><li>area_s</li><li>us_s</li><li>stratigraph_index_us</li><li>id_us</li><li>sito</li><li>area</li></ul>
        <div class="vbar"><i class="sb up"></i><i class="thumb"></i><i class="trough"></i><i class="sb up"></i><i class="sb dn"></i></div></div>
    </div>
    <div class="gutter"><i class="vdots"></i></div>
    <div class="group valori"><span class="cap">Valori</span>
      <div class="vals"></div>
      <div class="pair"><button class="btn">Campione</button><button class="btn">Tutto</button></div>
      <div class="unf"><i class="chk off"></i>Usa layer non filtrato</div>
    </div>
  </div>
  <div class="hsplit"><i class="hd"></i></div>
  <div class="group ops"><span class="cap"><i class="tri"></i>Operatori</span>
    <div class="opgrid"><button class="btn">=</button><button class="btn">&lt;</button><button class="btn">&gt;</button><button class="btn">LIKE</button><button class="btn">%</button><button class="btn">IN</button><button class="btn">NOT IN</button><button class="btn">&lt;=</button><button class="btn">&gt;=</button><button class="btn">!=</button><button class="btn">ILIKE</button><button class="btn">AND</button><button class="btn">OR</button><button class="btn">NOT</button></div>
  </div>
  <div class="group expr"><span class="cap">Espressioni filtro specifiche del gestore</span>
    <div class="editor">
      <div class="code"><span class="sel">sito = 'Rimini_(RN)_via_Ortaggi' <b>AND</b> ( cont_per = '3' <b>OR</b> cont_per <b>LIKE</b> '3/%' <b>OR</b> cont_per <b>LIKE</b> '%/3' <b>OR</b> cont_per <b>LIKE</b> '%/3/%')</span></div>
      <div class="hbar"><i class="sb lf"></i><i class="thumb"></i><i class="trough"></i><i class="sb lf"></i><i class="sb rt"></i></div>
    </div>
  </div>
  <div class="actions"><button class="btn focus">OK</button><button class="btn">Test</button><button class="btn">Pulisci</button><button class="btn">Cancel</button><button class="btn">Help</button></div>
</section>
</main>
</body>
</html>
```
FILE: styles.css
```css
* { box-sizing: border-box; }
body { margin: 0; font: 13px/18px "Noto Sans", "Open Sans", sans-serif; color: #000; }
.defs { position: absolute; width: 0; height: 0; }
.desktop { position: relative; width: 1920px; height: 1080px; overflow: hidden; background: linear-gradient(90deg, #444 0, #444 960px, #a9a9a9 961px, #c8c8c8 1916px, #111 1917px); }
.window { position: absolute; background: #efefef; display: flex; flex-direction: column; }
.qgis { left: 2px; top: 1px; width: 1115px; height: 1078px; border-right: 1px solid #999; }
.scavi { left: 1117px; top: 2px; width: 800px; height: 1078px; border-top: 1px solid #aaa; box-shadow: inset 5px 0 5px -4px #999; font-size: 11px; line-height: 16px; letter-spacing: -.1px; }
.query { left: 1011px; top: 507px; width: 905px; height: 569px; border: 1px solid #1979ca; box-shadow: 0 2px 12px rgba(0,0,0,.4); }
button { font: inherit; letter-spacing: inherit; color: #000; padding: 0; margin: 0; }
h4 { margin: 0; font-weight: 700; font-size: 11px; }

.titlebar { display: flex; align-items: center; background: #fff; flex: none; font: 12px/16px "Open Sans", sans-serif; color: #8a8a8a; }
.titlebar .t { margin-right: auto; letter-spacing: -.4px; }
.qgis .titlebar { height: 31px; padding: 0 21px 2px 9px; gap: 6px; }
.qgis .titlebar .wbtn { overflow: visible; margin-right: -1px; }
.scavi .titlebar { height: 30px; padding: 0 16px 0 8px; gap: 3px; letter-spacing: -.25px; }
.scavi .titlebar .t { letter-spacing: -.07px; font-size: 11.5px; }
.query .titlebar { height: 30px; padding: 0 17px 0 9px; gap: 6px; color: #000; }
.query .titlebar .t { letter-spacing: -.33px; }
.scavi .titlebar .q { margin-right: 33px; }
.query .titlebar .q { margin-right: 30px; }

.menu { display: grid; height: 27px; padding: 4px 0 0 10px; flex: none; border-bottom: 1px solid #b4b4b4; white-space: nowrap;
  grid-template-columns: 70px 68.500px 77px 49.500px 95.500px 61px 63px 55px 73px 44.500px 74.500px 82px 52px 80px; letter-spacing: .06px; }
u { text-underline-offset: 2px; }
.toolbar { display: grid; align-items: center; justify-items: center; height: 47px; flex: none; border-bottom: 1px solid #b4b4b4; }
.tb1 { grid-template-columns: 11px repeat(6,43px) 15px repeat(9,43px) 46px 13px 42px 18px 11px 14px 43px 14px 46px 12px 43px 13px 44px 13px 42px 13px 14px; }
.tb2 { grid-template-columns: 11px repeat(13,43px) 15px 43px 43px 10px 44px 11px 46px 9px 46px 42px 43px 43px 42px 11px 23px 14px 44px 13px; }
.tb3 { grid-template-columns: 11px 18px 43px 43px 42px 43px 43px 12px 45px 43px 41px 43px 44px 42px 15px repeat(11,43px) 54px 14px 43px; }
.ic { width: 32px; height: 32px; overflow: visible; display: block; }
.ic.gray { --h: #c8c8c8; opacity: .75; }
.g11 { font: 700 10px "Noto Sans"; fill: #777; }
.abc { font: 700 11px "Noto Sans"; fill: #3b3410; }
.stl { font: 900 18px Lato, sans-serif; fill: url(#gStl); }
.info { font: italic 700 18px "Liberation Serif"; fill: #fff; }
.pressed { width: 41px; height: 43px; display: grid; place-items: center; border: 1px solid #858585; border-radius: 2px; background: #cecece; }
.grip { width: 5px; height: 36px; justify-self: end; background: radial-gradient(circle at 1.500px 1.500px, #b9b9b9 1px, transparent 1.400px) 0 0/5px 5px, radial-gradient(circle at 3.500px 4px, #fff 1px, transparent 1.400px) 0 0/5px 5px; }
.more { justify-self: end; width: 12px; text-align: center; font: 700 14px/20px "Noto Sans"; margin-top: -2px; }
.more.c { justify-self: center; }
.dd { width: 0; height: 0; border: 4.500px solid transparent; border-top: 5px solid #000; border-bottom: 0; margin-top: -1px; }
.dd.dis { border-top-color: #999; }

.work { display: flex; height: 848px; flex: none; }
.canvas { width: 747px; border: 2px solid #bbb; border-width: 1px 2px 2px 2px; background: #fff; overflow: hidden; }
.map { display: block; }
.finds path { vector-effect: non-scaling-stroke; }
.quota { font: 9.500px "Noto Sans"; text-anchor: middle; paint-order: stroke; stroke: #fff; stroke-width: 2px; letter-spacing: -.2px; }
.vsplit { width: 6px; display: flex; align-items: center; justify-content: center; }
.vdots { display: block; width: 4px; height: 290px; background: radial-gradient(circle at 2px 2px, #bbb 1px, transparent 1.500px) 0 0/4px 5px; }
.dock { width: 312px; display: flex; flex-direction: column; }
.dockhead { height: 22px; display: flex; align-items: center; padding: 1px 0 0 1px; font-size: 12px; letter-spacing: -.15px; }
.dockhead span { padding: 0 10px; white-space: nowrap; }
.hdots { flex: 1; height: 6px; background: radial-gradient(circle at 1.500px 1.500px, #b9b9b9 1px, transparent 1.400px) 0 0/5px 5px; }
.dbtn { width: 14px; height: 14px; margin-left: 1px; border: 1px solid #888; border-radius: 2px; background: #f6f6f6; }
.docktools { display: grid; height: 39px; align-items: center; justify-items: center; padding-left: 1px; grid-template-columns: 36px 35px 36px 35px 36px 9px 37px 35px 36px; padding-bottom: 1px; }
.ic24 { width: 24px; height: 24px; overflow: visible; }
.tree { flex: 1; border: 2px solid #bbb; border-width: 2px 1px 2px 2px; background: #fff; border-radius: 2px; font-weight: 700; }
.tree .row { display: flex; align-items: center; height: 18px; padding-left: 4px; white-space: nowrap; letter-spacing: -.27px; }
.tree .row svg { margin: 0 6px 0 6px; }
.tree .alt { background: #efefef; }
.branch { width: 15px; height: 18px; margin-right: 4px; background: linear-gradient(#aaa,#aaa) 5px 9px/10px 1px no-repeat, linear-gradient(#aaa,#aaa) 5px 0/1px 18px no-repeat; opacity: .6; }
.branch.plus { opacity: 1; background: linear-gradient(#555,#555) 3px 8px/5px 1px no-repeat, linear-gradient(#555,#555) 5px 6px/1px 5px no-repeat, linear-gradient(#fff,#fff) 2px 5px/7px 7px no-repeat, linear-gradient(#999,#999) 1px 4px/9px 9px no-repeat, linear-gradient(#ccc,#ccc) 10px 8px/5px 1px no-repeat; }
.chk { display: block; flex: none; width: 13px; height: 13px; border: 1px solid #b5b5b5; background: linear-gradient(45deg, transparent 36%, #000 37%, #000 63%, transparent 64%) center/8px 8px no-repeat, linear-gradient(-45deg, transparent 36%, #000 37%, #000 63%, transparent 64%) center/8px 8px no-repeat, #fff; }
.chk.off { background: #fbfbfb; }
.side { width: 46px; display: flex; flex-direction: column; align-items: center; padding-left: 2px; }
.side .hdots { flex: none; width: 40px; margin: 6px 0 7px; }
.side svg { margin-bottom: 12px; }

.status { display: flex; align-items: center; flex: 1; padding: 0 0 1px 6px; white-space: nowrap; overflow: hidden; }
.lb { flex: none; }
.lb.a { width: 93px; letter-spacing: 0; }
.lb.b { width: 36px; letter-spacing: -.2px; }
.lb.c { width: 64px; letter-spacing: 0; }
.lb.d { width: 80px; padding-left: 9px; letter-spacing: -.1px; }
.lb.e { width: 86px; padding-left: 5px; letter-spacing: .15px; }
.lb.f { padding-left: 3px; letter-spacing: .2px; }
.field { height: 24px; flex: none; display: flex; align-items: center; border: 2px solid #c4c4c4; border-radius: 3px; background: #fff; padding-left: 4px; }
.coord { width: 248px; justify-content: center; letter-spacing: -.35px; padding: 0 2px 0 0; }
.mouse { margin: 0 14px 0 4px; }
.lock { margin: 0 15px 0 6px; }
.scale { width: 97px; padding-left: 3px; }
.mag { width: 77px; padding-left: 3px; letter-spacing: -.1px; }
.rot { width: 81px; margin-right: 6px; }
.field .drop { margin-left: auto; width: 16px; height: 20px; }
.drop { display: grid; place-items: center; border-left: 1px solid #b0b0b0; background: linear-gradient(#fdfdfd, #dcdcdc); }
.drop::before { content: ""; border: 4px solid transparent; border-top: 5px solid #111; border-bottom: 0; }
.ud { margin-left: auto; width: 16px; height: 20px; border-left: 1px solid #b0b0b0; background: linear-gradient(#b0b0b0,#b0b0b0) 0 50%/16px 1px no-repeat, #f2f2f2; display: flex; flex-direction: column; align-items: center; justify-content: space-around; }
.ud::before { content: ""; border: 4px solid transparent; border-bottom: 4px solid #111; border-top: 0; }
.ud::after { content: ""; border: 4px solid transparent; border-top: 4px solid #111; border-bottom: 0; }

.btn { border: 1px solid #b5b5b5; border-radius: 3px; background: linear-gradient(#fafafa, #dadada); box-shadow: inset 0 0 0 1px rgba(255,255,255,.35); display: grid; place-items: center; white-space: nowrap; }
.btn.focus { border-color: #666; }
.top { display: flex; padding: 9px 11px 0 10px; height: 131px; flex: none; }
.dbms { width: 391px; border-right: 1px solid #a0a0a0; margin-top: 2px; height: 115px; }
.dbms h4 { height: 23px; letter-spacing: -.1px; margin-top: -1px; }
.conn { width: 185px; height: 23px; }
.navgrid { display: grid; grid-template-columns: 46px 45px 46px 46px 46px 46px 46px; column-gap: 10px; row-gap: 9px; grid-template-rows: 26px 26px; margin-top: 9px; }
.navgrid .btn { width: 46px; height: 26px; }
.navgrid svg { width: 16px; height: 16px; overflow: visible; }
.ng { font: 700 7px "Noto Sans"; fill: #1592d4; }
.dbinfo { padding: 4px 0 0 9px; flex: 1; }
.dbinfo h4 { font-size: 12px; letter-spacing: -.3px; }
.infogrid { display: grid; grid-template-columns: 187px 187px; column-gap: 6px; grid-template-rows: 13px 17px 21px 21px; row-gap: 6px; font-size: 12px; margin: 6px -4px 0 0; align-items: center; letter-spacing: -.05px; }
.infogrid b { white-space: nowrap; }
.box { border: 1px solid #a5a5a5; height: 100%; display: flex; align-items: center; }
.box.mid { justify-content: center; font-weight: 700; }
.box.num { font-size: 14.500px; padding-left: 3px; }
.scavi hr { margin: 3px 10px 0; border: 0; height: 2px; background: linear-gradient(#999 50%, #fff 50%); flex: none; }
.combobox { border: 1px solid #8a8a8a; border-radius: 3px; display: flex; align-items: center; color: #7d7d7d; padding-left: 4px; flex: none; }
.combobox .drop { margin-left: auto; width: 16px; height: 100%; border-color: #9a9a9a; }
.combobox .drop::before { border-top-color: #777; }
.site { margin: 11px 10px 0; height: 25px; letter-spacing: -.2px; }
.line { display: flex; align-items: center; padding: 0 10px; flex: none; }
.big { font-size: 15px; letter-spacing: -.1px; }
.sito { height: 23px; margin-top: 9px; }
.sito .big { margin-right: auto; }
.p1 { width: 136px; height: 23px; margin-right: 11px; }
.p2 { width: 138px; height: 23px; }
.codes { height: 22px; margin-top: 9px; }
.c1 { width: 54px; height: 22px; margin-right: 7px; font-size: 12px; }
.c2 { width: 45px; height: 22px; font-size: 12px; }
.cl { width: 82px; margin-left: 150px; }
.inp { width: 75px; height: 20px; border: 1px solid #b5b5b5; border-radius: 2px; background: #fff; padding: 1px 0 0 4px; font-size: 12px; }
.per { height: 23px; margin-top: 9px; }
.per .big { width: 61px; }
.per .vis { width: 137px; height: 23px; margin-left: 216px; letter-spacing: -.4px; }
.dd4 { margin: 8px 10px 0; height: 19px; letter-spacing: -.15px; flex: none; }
.desc { margin: 1px 10px 0; height: 300px; flex: none; border: 2px solid #c4c4c4; border-radius: 2px; background: #fff; padding: 4px; white-space: nowrap; font-size: 12px; letter-spacing: .07px; }

.lead { margin: 11px 11px 0; height: 18px; letter-spacing: .03px; }
.cols { display: flex; padding: 0 11px; margin-top: 15px; height: 192px; flex: none; }
.group { border: 1px solid #b8b8b8; border-radius: 3px; position: relative; padding: 0 12px; }
.cap { position: absolute; left: 6px; top: -9px; padding: 0 2px; background: #efefef; color: #3d3d3d; font-weight: 700; letter-spacing: -.1px; line-height: 17px; white-space: nowrap; }
.campi { width: 438px; }
.valori { width: 437px; }
.gutter { width: 6px; display: flex; align-items: center; }
.gutter .vdots { height: 66px; }
.list { margin-top: 21px; height: 157px; width: 412px; border: 2px solid #bbb; border-width: 2px 1px 1px 1px; border-radius: 2px; background: #fff; display: flex; }
ul { list-style: none; margin: 0; padding: 0; flex: 1; overflow: hidden; height: 153px; }
li { height: 18px; padding-left: 4px; line-height: 19px; letter-spacing: .1px; }
li:nth-child(even) { background: #f5f5f5; }
.vbar { width: 16px; display: flex; flex-direction: column; margin-right: 2px; }
.sb { height: 16px; width: 16px; border: 1px solid #888; border-radius: 2px; background: linear-gradient(#fff,#e0e0e0); display: grid; place-items: center; flex: none; }
.sb::before { content: ""; border: 4px solid transparent; }
.sb.up::before { border-bottom: 4px solid #000; border-top: 0; }
.sb.dn::before { border-top: 4px solid #000; border-bottom: 0; }
.sb.lf::before { border-right: 4px solid #000; border-left: 0; }
.sb.rt::before { border-left: 4px solid #000; border-right: 0; }
.vbar .thumb { height: 35px; border: 1px solid #888; border-radius: 2px; background: radial-gradient(circle, #aaa .8px, transparent 1.200px) 1px 0/4px 4px content-box, linear-gradient(90deg,#fff,#e0e0e0) border-box; padding: 7px 2px; }
.trough { flex: 1; background: repeating-conic-gradient(#f9f9f9 0 25%, #ececec 0 50%) 0 0/2px 2px; border: 0 dotted #bbb; }
.vbar .trough { border-width: 0 1px; }
.hbar .trough { border-width: 1px 0; }
.vals { margin-top: 21px; height: 94px; border: 2px solid #bbb; border-width: 2px 1px 1px; border-radius: 2px; background: #fff; }
.pair { display: grid; grid-template-columns: 203px 202px; gap: 6px; margin-top: 6px; }
.pair .btn { height: 28px; }
.unf { display: flex; align-items: center; gap: 5px; margin-top: 8px; letter-spacing: .05px; }
.hsplit { height: 15px; flex: none; display: grid; justify-items: center; }
.hd { width: 290px; height: 5px; background: radial-gradient(circle at 2px 2px, #bbb 1px, transparent 1.500px) 0 0/5px 5px; margin: 1px 7px 0 0; }
.ops { margin: 0 11px; height: 97px; flex: none; padding-top: 21px; }
.ops .cap { left: -1px; top: -8px; padding: 0 8px 0 22px; }
.tri { position: absolute; left: 3px; top: 5px; border: 5.500px solid transparent; border-top: 7px solid #222; border-bottom: 0; }
.opgrid { display: grid; grid-template-columns: repeat(7, 75px); gap: 6px; grid-auto-rows: 28px; }
.expr { margin: 15px 11px 0; height: 129px; flex: none; padding-top: 21px; }
.expr .cap { letter-spacing: -.28px; }
.editor { height: 94px; width: 855px; border: 2px solid #2b86d0; border-radius: 2px; background: #fff; display: flex; flex-direction: column; }
.code { flex: 1; border-left: 14px solid #f4f4f4; background: linear-gradient(#fbf1ea,#fbf1ea) 0 0/100% 17px no-repeat; line-height: 17px; white-space: nowrap; }
.sel { display: inline-block; height: 17px; background: #0078d7; color: #fff; border-right: 1px solid #000; letter-spacing: -.04px; }
.hbar { display: flex; height: 16px; padding-right: 1px; }
.hbar .thumb { width: 71px; border: 1px solid #888; border-radius: 2px; padding: 2px 26px; background: radial-gradient(circle, #aaa .8px, transparent 1.200px) 0 0/4px 4px content-box, linear-gradient(#fff,#e0e0e0) border-box; }
.actions { display: flex; justify-content: flex-end; gap: 10px; padding: 6px 11px 0; }
.actions .btn { width: 75px; height: 28px; }
```
